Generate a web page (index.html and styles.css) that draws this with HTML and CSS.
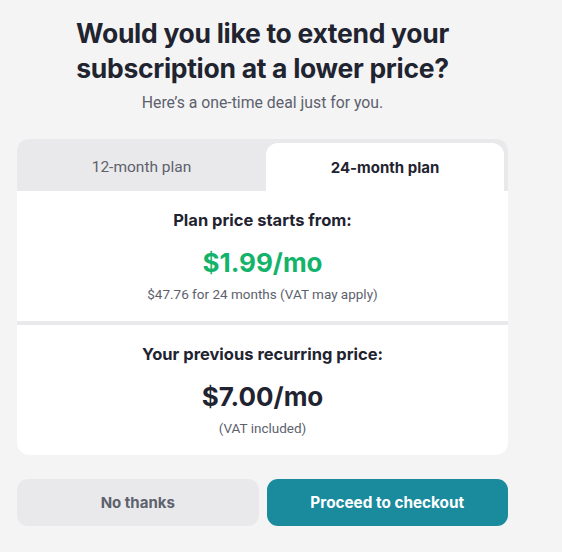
FILE: index.html
```html
<!DOCTYPE html>
<html lang="en">
<head>
<meta charset="utf-8">
<title>Extend subscription</title>
<link rel="stylesheet" href="styles.css">
</head>
<body>
<main class="page">
  <header class="header">
    <h1 class="title">Would you like to extend your subscription at a lower price?</h1>
    <p class="subtitle">Here’s a one-time deal just for you.</p>
  </header>
  <section class="card">
    <div class="tabs">
      <div class="tab">12-month plan</div>
      <div class="tab tab-active">24-month plan</div>
    </div>
    <div class="panel">
      <h2 class="panel-title">Plan price starts from:</h2>
      <div class="price price-green">$1.99/mo</div>
      <div class="note">$47.76 for 24 months (VAT may apply)</div>
    </div>
    <div class="panel panel-last">
      <h2 class="panel-title">Your previous recurring price:</h2>
      <div class="price">$7.00/mo</div>
      <div class="note">(VAT included)</div>
    </div>
  </section>
  <div class="actions">
    <button class="btn btn-secondary">No thanks</button>
    <button class="btn btn-primary">Proceed to checkout</button>
  </div>
</main>
</body>
</html>
```
FILE: styles.css
```css
* { box-sizing: border-box; }
html, body { margin: 0; padding: 0; }
body {
  background: #f4f4f4;
  color: #1f2430;
  font-family: "Inter", "Liberation Sans", sans-serif;
}
.page {
  width: 491px;
  margin-left: 17px;
  padding-top: 16px;
}
.header { text-align: center; }
.title {
  margin: 0 auto;
  width: 400px;
  font-size: 26.5px;
  line-height: 35px;
  font-weight: 700;
  letter-spacing: -0.3px;
}
.subtitle {
  margin: 7px 0 0;
  font-family: "Roboto", "Liberation Sans", sans-serif;
  font-size: 15.8px;
  line-height: 20px;
  color: #5d616d;
}
.card {
  margin-top: 26px;
  background: #e9e9eb;
  border-radius: 12px;
  overflow: hidden;
}
.tabs {
  display: grid;
  grid-template-columns: 249px 238px;
  padding-top: 4px;
}
.tab {
  height: 48px;
  display: flex;
  align-items: center;
  justify-content: center;
  font-family: "Roboto", "Liberation Sans", sans-serif;
  font-size: 15.5px;
  color: #5d616d;
}
.tab-active {
  background: #fff;
  border-radius: 12px 12px 0 0;
  font-family: "Inter", "Liberation Sans", sans-serif;
  font-size: 15px;
  font-weight: 700;
  color: #1f2430;
}
.panel {
  background: #fff;
  height: 130px;
  padding-top: 17px;
  text-align: center;
}
.panel-last {
  margin-top: 4px;
}
.panel-title {
  margin: 0;
  font-size: 16.5px;
  line-height: 24px;
  font-weight: 700;
}
.price {
  margin-top: 14px;
  font-size: 26px;
  line-height: 34px;
  font-weight: 700;
}
.price-green { color: #13b36b; }
.note {
  margin-top: 5px;
  font-family: "Roboto", "Liberation Sans", sans-serif;
  font-size: 13.5px;
  line-height: 18px;
  color: #5d616d;
}
.actions {
  display: grid;
  grid-template-columns: 1fr 1fr;
  gap: 8px;
  margin-top: 24px;
}
.btn {
  height: 47px;
  border: 0;
  border-radius: 11px;
  font-family: "Inter", "Liberation Sans", sans-serif;
  font-size: 15px;
  font-weight: 700;
}
.btn-secondary { background: #e9e9eb; color: #5d616d; }
.btn-primary { background: #1a8b9d; color: #fff; font-size: 15.3px; }
```
